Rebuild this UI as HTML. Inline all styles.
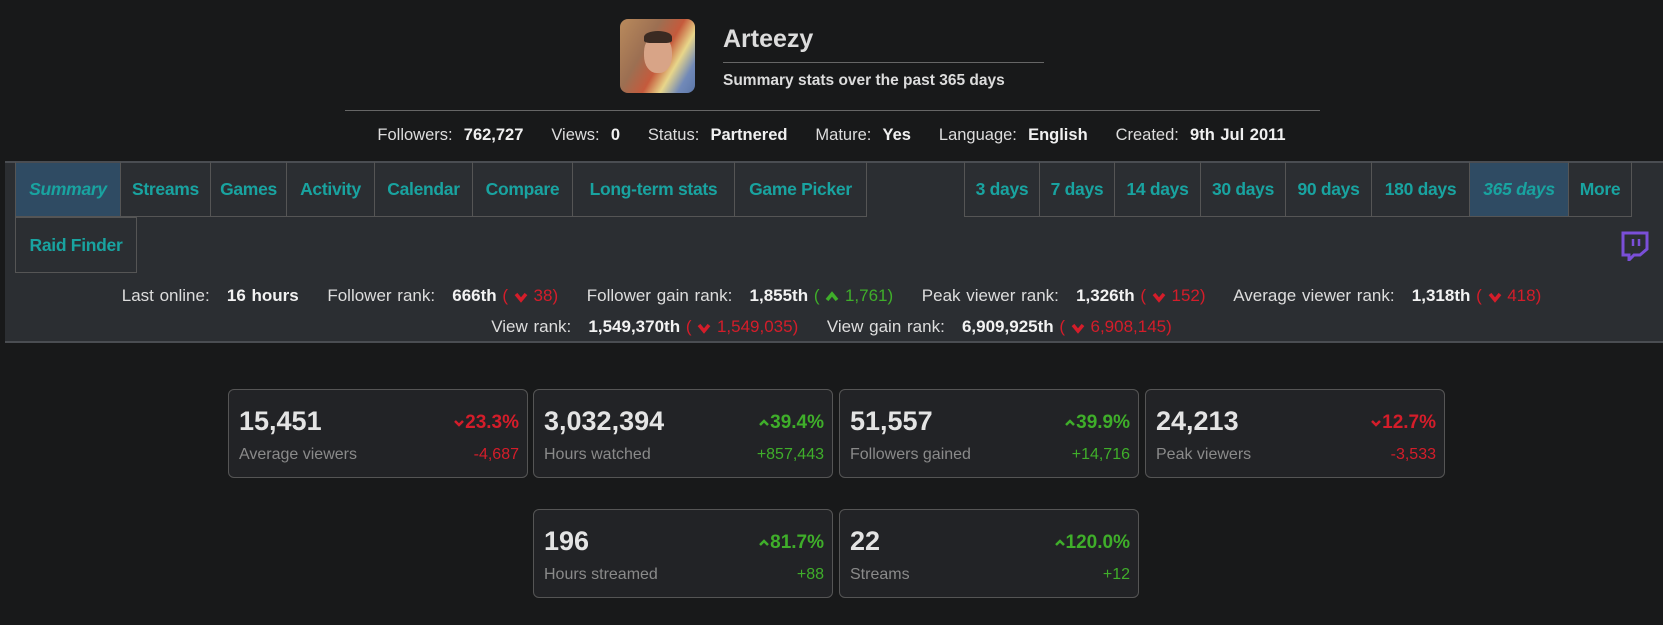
<!DOCTYPE html>
<html><head><meta charset="utf-8"><style>
*{box-sizing:border-box;margin:0;padding:0}
body{width:1663px;height:625px;background:#18191a;font-family:"Liberation Sans",sans-serif;color:#ddd;position:relative;overflow:hidden}
.abs{position:absolute}
.av{left:620px;top:19px;width:75px;height:74px;border-radius:8px;background:linear-gradient(120deg,#b98a5c 0%,#9c6f52 35%,#c55a3c 55%,#e8d68a 70%,#7189b8 85%,#5b76a8 100%);overflow:hidden}
.face{position:absolute;left:24px;top:16px;width:28px;height:38px;border-radius:45%;background:#d8a487}
.hair{position:absolute;left:24px;top:12px;width:28px;height:12px;border-radius:50% 50% 20% 20%;background:#3a2a22}
.name{left:723px;top:25px;font-size:25px;font-weight:bold;color:#dcdcdc}
.sub{left:723px;top:72px;font-size:15.5px;font-weight:bold;color:#dcdcdc}
.hr{height:1px;background:#666}
.info{left:0;width:1663px;top:126px;text-align:center;font-size:16.5px;color:#ddd;white-space:pre;word-spacing:1px}
.info b{color:#f0f0f0}
.panel{left:5px;top:161px;width:1658px;height:182px;background:#2b2e32;border-top:2px solid #4a4d52;border-bottom:2px solid #4a4d52}
.tab{position:absolute;top:161px;height:56px;border:1px solid #555;border-top:2px solid #4a4d52;color:#19a3a0;font-weight:bold;font-size:17.5px;display:flex;align-items:center;justify-content:center;white-space:nowrap;letter-spacing:-0.3px}
.act{background:#2f4b63;font-style:italic}
.rk{left:0;width:1663px;text-align:center;font-size:17px;color:#ddd;white-space:pre;word-spacing:1px}
.rk b{color:#f2f2f2}.r{color:#d41d2a}.g{color:#3fae2a}
.card{position:absolute;width:300px;height:89px;border:1px solid #555;border-radius:6px;background:#222326}
.big{position:absolute;left:10px;top:16px;font-size:27px;font-weight:bold;color:#e4e4e4}
.pct{position:absolute;right:8px;top:22px;font-size:19px;font-weight:bold}
.lbl{position:absolute;left:10px;top:56px;font-size:16px;color:#8a8a8a}
.dl{position:absolute;right:8px;top:56px;font-size:16px}
svg.c{display:inline-block;vertical-align:middle}
</style></head><body>
<div class="abs av"><div class="face"></div><div class="hair"></div></div>
<div class="abs name">Arteezy</div>
<div class="abs hr" style="left:723px;top:62px;width:321px"></div>
<div class="abs sub">Summary stats over the past 365 days</div>
<div class="abs hr" style="left:345px;top:110px;width:975px"></div>
<div class="abs info">Followers:  <b>762,727</b>     Views:  <b>0</b>     Status:  <b>Partnered</b>     Mature:  <b>Yes</b>     Language:  <b>English</b>     Created:  <b>9th Jul 2011</b></div>
<div class="abs panel"></div>
<div class="tab act" style="left:15px;width:106px">Summary</div>
<div class="tab" style="left:120px;width:91px">Streams</div>
<div class="tab" style="left:210px;width:77px">Games</div>
<div class="tab" style="left:286px;width:89px">Activity</div>
<div class="tab" style="left:374px;width:99px">Calendar</div>
<div class="tab" style="left:472px;width:101px">Compare</div>
<div class="tab" style="left:572px;width:163px">Long-term stats</div>
<div class="tab" style="left:734px;width:133px">Game Picker</div>
<div class="tab" style="left:15px;top:217px;width:122px;border-top:1px solid #555">Raid Finder</div>
<div class="tab" style="left:964px;width:76px">3 days</div>
<div class="tab" style="left:1039px;width:76px">7 days</div>
<div class="tab" style="left:1114px;width:87px">14 days</div>
<div class="tab" style="left:1200px;width:86px">30 days</div>
<div class="tab" style="left:1285px;width:87px">90 days</div>
<div class="tab" style="left:1371px;width:99px">180 days</div>
<div class="tab act" style="left:1469px;width:100px">365 days</div>
<div class="tab" style="left:1568px;width:64px">More</div>
<svg class="abs" style="left:1620px;top:230px" width="30" height="31" viewBox="0 0 30 31"><path d="M3 3H27V19L20 25H14L9 30V25H3Z" fill="none" stroke="#7a4fd8" stroke-width="3"/><path d="M13 9V16M19 9V16" stroke="#7a4fd8" stroke-width="2.5"/></svg>
<div class="abs rk" style="top:286px">Last online:   <b>16 hours</b>     Follower rank:   <b>666th</b> <span class="r">( <svg class="c" width="14" height="12" viewBox="0 0 14 12"><path d="M2 3L7 9L12 3" fill="none" stroke="#d41d2a" stroke-width="3.5"/></svg> 38)</span>     Follower gain rank:   <b>1,855th</b> <span class="g">( <svg class="c" width="14" height="12" viewBox="0 0 14 12"><path d="M2 9L7 3L12 9" fill="none" stroke="#3fae2a" stroke-width="3.5"/></svg> 1,761)</span>     Peak viewer rank:   <b>1,326th</b> <span class="r">( <svg class="c" width="14" height="12" viewBox="0 0 14 12"><path d="M2 3L7 9L12 3" fill="none" stroke="#d41d2a" stroke-width="3.5"/></svg> 152)</span>     Average viewer rank:   <b>1,318th</b> <span class="r">( <svg class="c" width="14" height="12" viewBox="0 0 14 12"><path d="M2 3L7 9L12 3" fill="none" stroke="#d41d2a" stroke-width="3.5"/></svg> 418)</span></div>
<div class="abs rk" style="top:317px">View rank:   <b>1,549,370th</b> <span class="r">( <svg class="c" width="14" height="12" viewBox="0 0 14 12"><path d="M2 3L7 9L12 3" fill="none" stroke="#d41d2a" stroke-width="3.5"/></svg> 1,549,035)</span>     View gain rank:   <b>6,909,925th</b> <span class="r">( <svg class="c" width="14" height="12" viewBox="0 0 14 12"><path d="M2 3L7 9L12 3" fill="none" stroke="#d41d2a" stroke-width="3.5"/></svg> 6,908,145)</span></div>

<div class="card" style="left:228px;top:389px"><div class="big">15,451</div><div class="pct r"><svg class="c" width="12" height="10" viewBox="0 0 12 10"><path d="M2 3L6 7L10 3" fill="none" stroke="#d41d2a" stroke-width="2.5"/></svg>23.3%</div><div class="lbl">Average viewers</div><div class="dl r">-4,687</div></div>
<div class="card" style="left:533px;top:389px"><div class="big">3,032,394</div><div class="pct g"><svg class="c" width="12" height="10" viewBox="0 0 12 10"><path d="M2 7L6 3L10 7" fill="none" stroke="#3fae2a" stroke-width="2.5"/></svg>39.4%</div><div class="lbl">Hours watched</div><div class="dl g">+857,443</div></div>
<div class="card" style="left:839px;top:389px"><div class="big">51,557</div><div class="pct g"><svg class="c" width="12" height="10" viewBox="0 0 12 10"><path d="M2 7L6 3L10 7" fill="none" stroke="#3fae2a" stroke-width="2.5"/></svg>39.9%</div><div class="lbl">Followers gained</div><div class="dl g">+14,716</div></div>
<div class="card" style="left:1145px;top:389px"><div class="big">24,213</div><div class="pct r"><svg class="c" width="12" height="10" viewBox="0 0 12 10"><path d="M2 3L6 7L10 3" fill="none" stroke="#d41d2a" stroke-width="2.5"/></svg>12.7%</div><div class="lbl">Peak viewers</div><div class="dl r">-3,533</div></div>
<div class="card" style="left:533px;top:509px"><div class="big">196</div><div class="pct g"><svg class="c" width="12" height="10" viewBox="0 0 12 10"><path d="M2 7L6 3L10 7" fill="none" stroke="#3fae2a" stroke-width="2.5"/></svg>81.7%</div><div class="lbl">Hours streamed</div><div class="dl g">+88</div></div>
<div class="card" style="left:839px;top:509px"><div class="big">22</div><div class="pct g"><svg class="c" width="12" height="10" viewBox="0 0 12 10"><path d="M2 7L6 3L10 7" fill="none" stroke="#3fae2a" stroke-width="2.5"/></svg>120.0%</div><div class="lbl">Streams</div><div class="dl g">+12</div></div>
</body></html>
